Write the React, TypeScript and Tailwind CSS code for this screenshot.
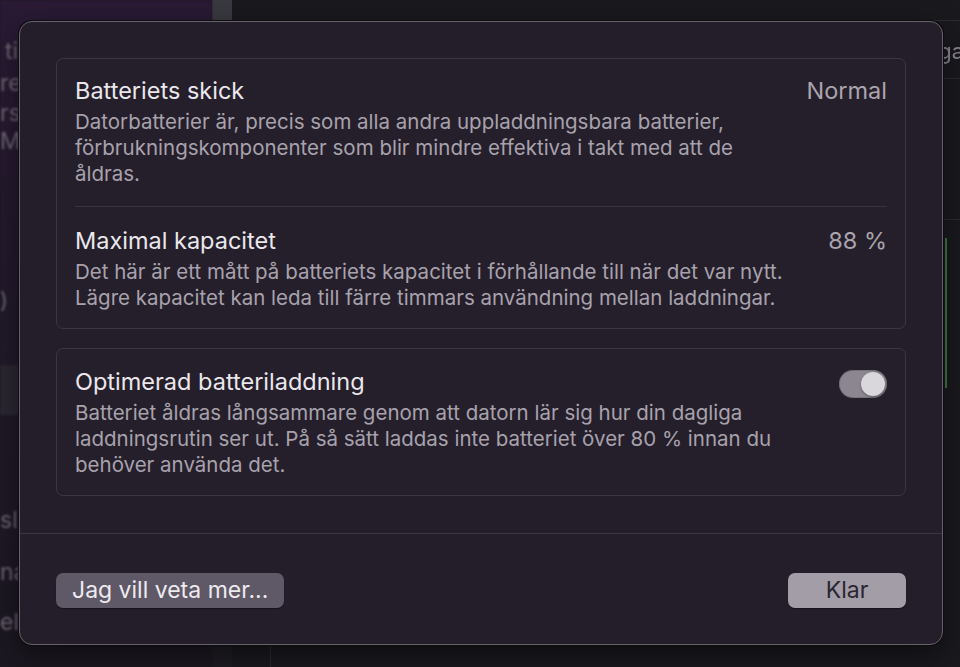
import React from "react";

const sidebarBits = [
  { label: "ti", top: "mt-[38px]", pad: "pl-[5px]" },
  { label: "re", top: "mt-[6px]", pad: "pl-0" },
  { label: "rsl", top: "mt-[4px]", pad: "pl-0" },
  { label: "Ma", top: "mt-[2px]", pad: "pl-0" },
];

const Row = ({
  title,
  value,
  children,
}: {
  title: string;
  value?: React.ReactNode;
  children: React.ReactNode;
}) => (
  <div className="flex items-start gap-5">
    <div className="flex-1 whitespace-nowrap">
      <div className="text-[23.5px] leading-[26px] text-[#ebe7ed]">{title}</div>
      <p className="mt-[5px] text-[20.5px] leading-[26px] text-[#a8a2ad]">
        {children}
      </p>
    </div>
    {value}
  </div>
);

export default function App() {
  return (
    <div
      className="relative w-[960px] h-[667px] overflow-hidden bg-[#1b1a1f]"
      style={{ fontFamily: "Inter, 'Noto Sans', sans-serif" }}
    >
      {/* window underneath */}
      <div className="flex h-full">
        <div className="w-[212px] h-full bg-gradient-to-b from-[#2a1a35] via-[#221a2b] to-[#1c1822] flex flex-col blur-[1px]">
          {sidebarBits.map((item) => (
            <div
              key={item.label}
              className={`${item.top} ${item.pad} text-[23px] leading-[26px] text-[#6e6676]`}
            >
              {item.label}
            </div>
          ))}
          <div className="mt-[130px] text-[22px] text-[#6e6676]">)</div>
          <div className="mt-[48px] h-[50px] bg-[#2c2733]" />
          <div className="mt-[92px] text-[23px] leading-[26px] text-[#6e6676]">sl</div>
          <div className="mt-[26px] text-[23px] leading-[26px] text-[#6e6676]">na</div>
          <div className="mt-[24px] text-[23px] leading-[26px] text-[#6e6676]">ell</div>
        </div>
        <div className="w-[20px] h-full bg-[#1f1d24] flex flex-col">
          <div className="h-[22px] bg-[#3a3840]" />
        </div>
        <div className="flex-1 h-full pl-[38px] pt-[20px] bg-[#1a191e]">
          <div className="h-full rounded-tl-[10px] border-l border-t border-[#2c2b31] flex flex-col items-end">
            <div className="mt-[14px] -mr-[4px] text-[22px] text-[#8d8893] blur-[0.5px]">ga</div>
            <div className="w-[20px] border-t border-[#2c2b31] mt-[10px]" />
            <div className="w-[20px] border-t border-[#2c2b31] mt-[140px]" />
            <div className="mt-[18px] mr-[13px] w-[2px] h-[150px] bg-[#3f7a45]" />
          </div>
        </div>
      </div>

      {/* sheet */}
      <div className="absolute left-[19px] top-[21px] w-[924px] h-[624px] rounded-[13px] border border-[#67626c] bg-[#231e29] shadow-[0_0_0_1px_#0c0b0e,0_10px_30px_rgba(0,0,0,0.5)] flex flex-col">
        <div className="px-[36px] pt-[36px] flex flex-col gap-[19px]">
          <div className="rounded-[7px] border border-[#3b3640] bg-[#241f2a] px-[18px] pt-[19px] pb-[17px]">
            <Row
              title="Batteriets skick"
              value={
                <div className="text-[23.5px] leading-[26px] text-[#aaa4ae]">Normal</div>
              }
            >
              Datorbatterier är, precis som alla andra uppladdningsbara batterier,
              <br />
              förbrukningskomponenter som blir mindre effektiva i takt med att de
              <br />
              åldras.
            </Row>
            <div className="mt-[19px] mb-[21px] border-t border-[#38333d]" />
            <Row
              title="Maximal kapacitet"
              value={
                <div className="text-[23.5px] leading-[26px] text-[#aaa4ae]">88 %</div>
              }
            >
              Det här är ett mått på batteriets kapacitet i förhållande till när det var nytt.
              <br />
              Lägre kapacitet kan leda till färre timmars användning mellan laddningar.
            </Row>
          </div>

          <div className="rounded-[7px] border border-[#3b3640] bg-[#241f2a] px-[18px] pt-[20px] pb-[17px]">
            <Row
              title="Optimerad batteriladdning"
              value={
                <div className="mt-[1px] w-[48px] h-[28px] rounded-full bg-[#8b8690] flex items-center justify-end px-[2px] shadow-[inset_0_0_0_1px_rgba(0,0,0,0.15)]">
                  <div className="w-[24px] h-[24px] rounded-full bg-[#d9d6dc] shadow-[0_1px_2px_rgba(0,0,0,0.35)]" />
                </div>
              }
            >
              Batteriet åldras långsammare genom att datorn lär sig hur din dagliga
              <br />
              laddningsrutin ser ut. På så sätt laddas inte batteriet över 80 % innan du
              <br />
              behöver använda det.
            </Row>
          </div>
        </div>

        <div className="mt-[37px] border-t border-[#3b3640]" />

        <div className="flex-1 flex items-center justify-between px-[36px] pt-[2px]">
          <button className="h-[35px] px-[16px] rounded-[7px] bg-[#5f5866] text-[23px] leading-[26px] text-[#eeebef] shadow-[0_1px_1px_rgba(0,0,0,0.4)]">
            Jag vill veta mer...
          </button>
          <button className="h-[35px] w-[118px] rounded-[7px] bg-[#a29da6] text-[23px] leading-[26px] text-[#2a2530] shadow-[0_1px_1px_rgba(0,0,0,0.4)]">
            Klar
          </button>
        </div>
      </div>
    </div>
  );
}
